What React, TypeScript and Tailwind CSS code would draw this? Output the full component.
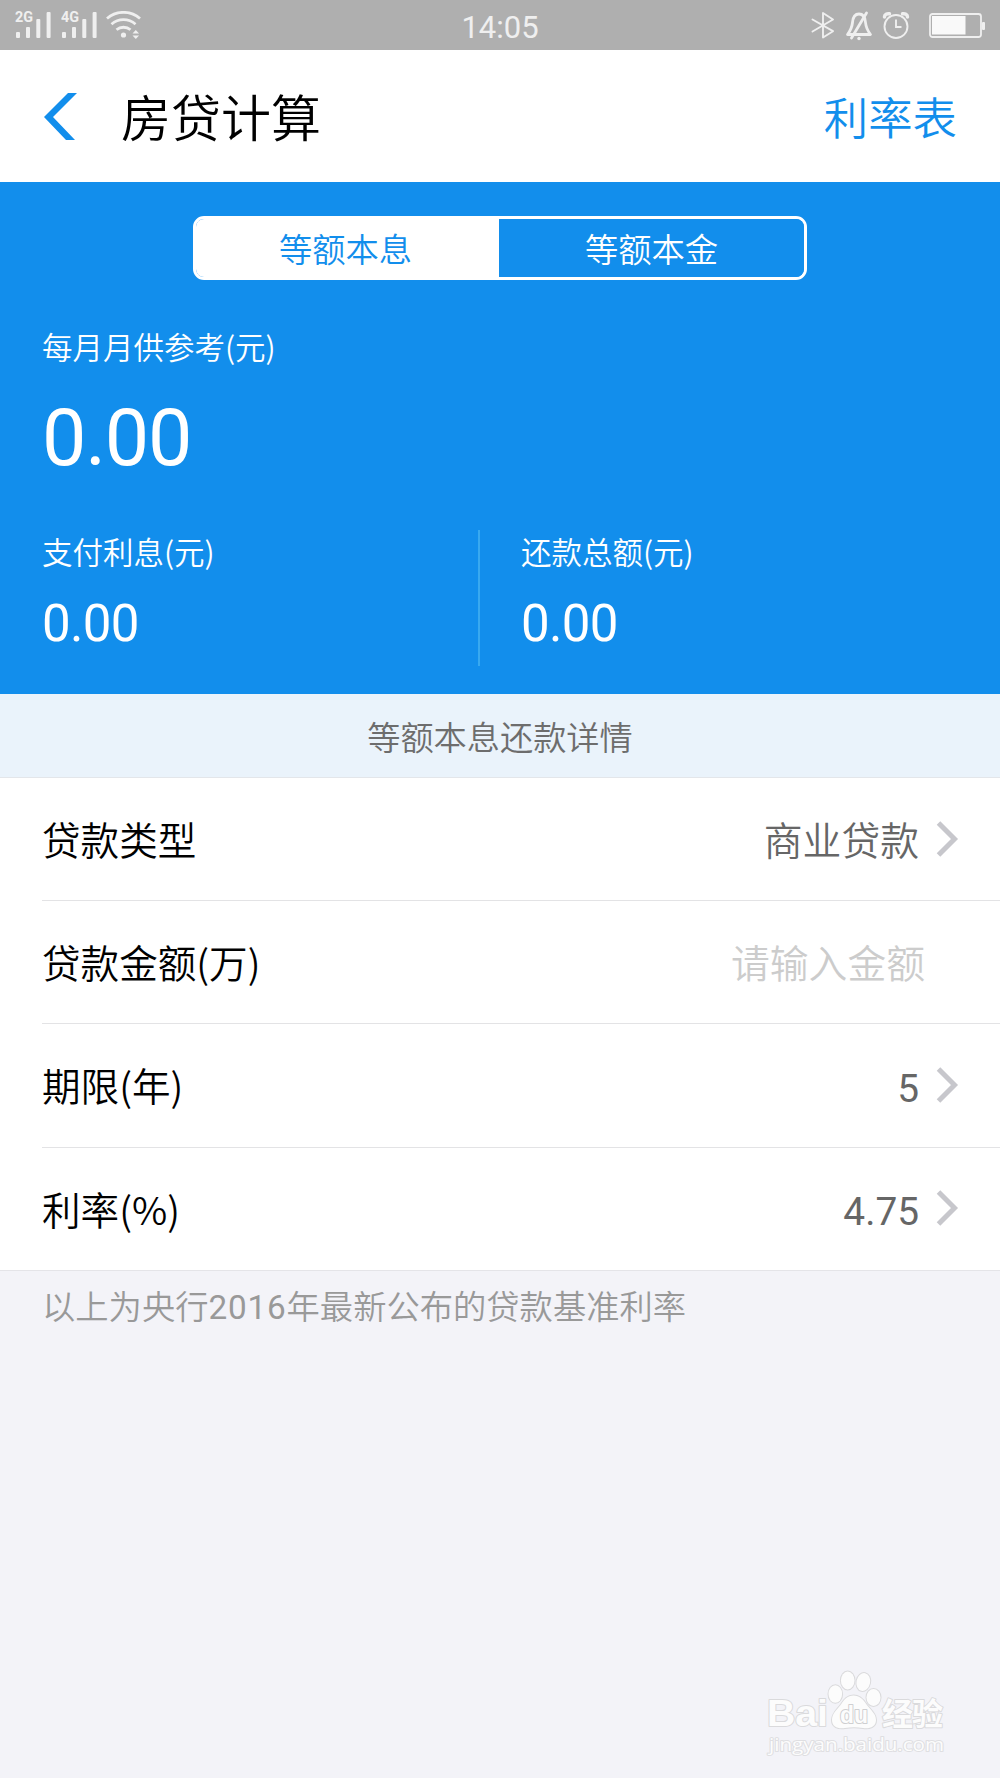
import React, { useState } from 'react';
import clsx from 'clsx';

type Method = 'interest' | 'principal';

interface LoanRow {
  label: string;
  value?: string;
  numeric?: boolean;
  placeholder?: string;
}

const rows: LoanRow[] = [
  { label: '贷款类型', value: '商业贷款' },
  { label: '贷款金额(万)', placeholder: '请输入金额' },
  { label: '期限(年)', value: '5', numeric: true },
  { label: '利率(%)', value: '4.75', numeric: true }
];

function Signal({ label }: { label: string }) {
  return (
    <svg className="-mt-[4px]" width="36" height="32" viewBox="0 -4 36 32" fill="#efefef">
      <text x="0" y="11" fontSize="14" fontWeight="700" fontFamily="Roboto, sans-serif" textLength="18" lengthAdjust="spacingAndGlyphs">
        {label}
      </text>
      <rect x="1" y="21" width="4" height="6" rx="1" />
      <rect x="11" y="16" width="4" height="11" rx="1" />
      <rect x="21.3" y="8" width="4" height="19" rx="1" />
      <rect x="31.6" y="1" width="4" height="26" rx="1" />
    </svg>
  );
}

function StatusBar() {
  return (
    <div className="flex h-[50px] items-center justify-between bg-[#afafaf] pr-[15px] pl-[15px] text-[#efefef]">
      <div className="flex w-[300px] items-center">
        <Signal label="2G" />
        <div className="w-[10px]" />
        <Signal label="4G" />
        <svg className="ml-[9px]" width="36" height="28" viewBox="0 0 36 28" fill="none" stroke="#efefef" strokeWidth="2.8">
          <path d="M1 7.5C10.5-.7 24.5-.7 34 7.5M5.5 13.2C12.5 7.2 22.5 7.2 29.5 13.2M10.5 18.8C14.5 15.4 20.5 15.4 24.5 18.8" />
          <circle cx="17.5" cy="24" r="2.6" fill="#efefef" stroke="none" />
          <path d="M26.5 22.5l3.3-3.5 3.3 3.5zM26.5 24.5l3.3 3.5 3.3-3.5z" fill="#efefef" stroke="none" />
        </svg>
      </div>
      <div className="mt-1.5 font-['Roboto',sans-serif] text-[31px] leading-[40px] font-normal">14:05</div>
      <div className="flex w-[300px] items-center justify-end">
        <svg width="24" height="28" viewBox="0 0 24 28" fill="none" stroke="#efefef" strokeWidth="1.9" strokeLinejoin="round" strokeLinecap="round">
          <path d="M1.5 8.5L22 20.2 12 26.5V2L22 8.5 1.5 20.5" />
        </svg>
        <svg className="mt-[1px] ml-[10px]" width="28" height="30" viewBox="0 0 28 30" fill="none" stroke="#efefef" strokeWidth="2.8" strokeLinecap="round" strokeLinejoin="round">
          <path d="M2.5 23.5c3.5-4.5 4.5-7 5-12 .5-6 3-8.500 6.5-8.500s6 2.500 6.5 8.500c.5 5 1.500 7.500 5 12z" />
          <path d="M6.5 27L21.5 2" />
          <circle cx="14" cy="27.5" r="1.7" fill="#efefef" stroke="none" />
        </svg>
        <svg className="ml-[9px]" width="28" height="28" viewBox="0 0 28 28" fill="none" stroke="#efefef" strokeWidth="1.9">
          <circle cx="14" cy="15.5" r="11.5" />
          <path d="M14 8.500V16h5.500" />
          <path d="M2.5 6C2.5 3.500 5 2.300 7.500 2.800M25.500 6c0-2.500-2.500-3.700-5-3.200" strokeWidth="3.5" strokeLinecap="round" />
        </svg>
        <svg className="ml-[19px]" width="56" height="25" viewBox="0 0 56 25">
          <rect x="1" y="1" width="51" height="23" rx="2.5" fill="none" stroke="#efefef" strokeWidth="1.8" />
          <rect x="3" y="3" width="33.5" height="18.5" fill="#f9f9f9" />
          <rect x="53" y="9" width="3" height="8" rx="1" fill="#efefef" />
        </svg>
      </div>
    </div>
  );
}

function Chevron() {
  return (
    <svg className="-mt-[1px] ml-[17px]" width="23" height="38" viewBox="0 0 23 38" fill="none" stroke="#c7c7cc" strokeWidth="5">
      <path d="M2.5 3L18.5 19 2.5 35" />
    </svg>
  );
}

function Watermark() {
  return (
    <svg width="182" height="92" viewBox="0 0 182 92" fill="#fcfcfc" stroke="#dadadc" strokeWidth="2" paintOrder="stroke" strokeLinejoin="round">
      <ellipse cx="69.3" cy="25" rx="6.8" ry="8.8" />
      <ellipse cx="81.7" cy="11.5" rx="6.8" ry="9" />
      <ellipse cx="97.3" cy="13" rx="6.8" ry="9" transform="rotate(12 97.3 13)" />
      <ellipse cx="107.5" cy="28.5" rx="7" ry="8.5" />
      <path d="M87.5 26.5c6 0 9.5 3.5 13 9 4 5.5 9.5 9 9.5 15.5 0 7-6.5 9-13 8-6-1-12-1-18 0-7 1-13-1-13-8 0-6.5 4.5-9.5 9-15.5 3.500-5.500 6.500-9 12.500-9z" />
      <text x="1" y="57" fontSize="37" fontWeight="700" textLength="61" lengthAdjust="spacingAndGlyphs" fontFamily="'Liberation Sans', sans-serif">Bai</text>
      <text x="74" y="54" fontSize="24" fontWeight="700" textLength="28" lengthAdjust="spacingAndGlyphs" fontFamily="'Liberation Sans', sans-serif" stroke="#cfcfd1">du</text>
      <text x="116" y="55.5" fontSize="31" fontWeight="700" textLength="61" fontFamily="'Noto Sans CJK SC', sans-serif">经验</text>
      <text x="3" y="82" fontSize="18" fontWeight="400" textLength="175" lengthAdjust="spacingAndGlyphs" fontFamily="'Open Sans', sans-serif" stroke="#dfdfe2">jingyan.baidu.com</text>
    </svg>
  );
}

export default function App() {
  const [method, setMethod] = useState<Method>('interest');
  const [amount, setAmount] = useState('');

  const tabClass = (active: boolean) =>
    active ? 'bg-white text-[#128eec]' : 'bg-[#128eec] text-white';

  return (
    <div className="flex h-[1778px] w-[1000px] flex-col overflow-hidden bg-[#f3f3f8] font-['Noto_Sans_CJK_SC',sans-serif] font-[350]">
      <StatusBar />

      <header className="flex h-[132px] items-center bg-white pr-[43px] pl-[43px]">
        <svg width="36" height="49" viewBox="0 0 36 49" fill="#128eec">
          <path d="M25 1h9L10 25l22 23h-9L1 25z" />
        </svg>
        <h1 className="-mt-[3px] ml-[42px] text-[50px] leading-[60px] text-black">房贷计算</h1>
        <button className="-mt-[1px] ml-auto text-[44.4px] leading-[60px] text-[#128eec]">利率表</button>
      </header>

      <section className="h-[511.5px] bg-[#128eec] pt-[34px] text-white">
        <div className="mx-auto flex h-[64px] w-[614px] overflow-hidden rounded-[11px] border-[3px] border-white text-[33.3px] leading-[58px]">
          <button className={clsx('w-[303px] pr-[4px]', tabClass(method === 'interest'))} onClick={() => setMethod('interest')}>
            等额本息
          </button>
          <button className={clsx('flex-1', tabClass(method === 'principal'))} onClick={() => setMethod('principal')}>
            等额本金
          </button>
        </div>

        <div className="mt-[46px] pl-[42px]">
          <div className="text-[30.5px] leading-[40px]">每月月供参考(元)</div>
          <div className="mt-[32px] font-['Roboto',sans-serif] text-[79px] leading-[80px] font-normal tracking-[-1.2px]">0.00</div>
        </div>

        <div className="mt-[52px] flex">
          <div className="h-[136px] w-[480px] border-r-2 border-[#38a9f0] pl-[42px]">
            <div className="-mt-[1px] text-[30.5px] leading-[44px]">支付利息(元)</div>
            <div className="mt-[21px] font-['Roboto',sans-serif] text-[51px] leading-[60px] font-normal tracking-[-0.7px]">0.00</div>
          </div>
          <div className="pl-[41px]">
            <div className="-mt-[1px] text-[30.5px] leading-[44px]">还款总额(元)</div>
            <div className="mt-[21px] font-['Roboto',sans-serif] text-[51px] leading-[60px] font-normal tracking-[-0.7px]">0.00</div>
          </div>
        </div>
      </section>

      <div className="h-[84.5px] border-b border-[#e3e6ea] bg-[#eaf3fb] text-center text-[33.2px] leading-[84px] text-[#6d6d6d]">
        等额本息还款详情
      </div>

      <div className="border-b border-[#e4e4e8] bg-white pl-[42px]">
        {rows.map((row, i) => (
          <div
            key={row.label}
            className={clsx(
              'flex items-center',
              i < rows.length - 1 ? 'h-[123.2px] border-b border-[#e3e3e5]' : 'h-[122.4px]'
            )}
          >
            <span className="-mt-[2px] text-[38.6px] leading-[60px] text-black">{row.label}</span>
            {row.placeholder ? (
              <input
                className="-mt-[3px] mr-[75px] ml-auto w-[300px] text-right text-[38.8px] leading-[60px] outline-none placeholder:text-[#cccccc]"
                placeholder={row.placeholder}
                value={amount}
                onChange={(e) => setAmount(e.target.value)}
              />
            ) : (
              <div className="mr-[41px] ml-auto flex items-center">
                <span
                  className={clsx(
                    'text-[38.8px] leading-[60px] text-[#666666]',
                    row.numeric ? "mt-[7px] font-['Roboto',sans-serif] font-normal" : '-mt-[2px]'
                  )}
                >
                  {row.value}
                </span>
                <Chevron />
              </div>
            )}
          </div>
        ))}
      </div>

      <p className="mt-[9px] pl-[42px] text-[33.3px] leading-[50px] text-[#999999]">
        以上为央行<span className="font-['Roboto',sans-serif] font-normal tracking-[0.8px]">2016</span>年最新公布的贷款基准利率
      </p>

      <div className="mt-auto mr-[52px] flex justify-end pb-[17px]">
        <Watermark />
      </div>
    </div>
  );
}
